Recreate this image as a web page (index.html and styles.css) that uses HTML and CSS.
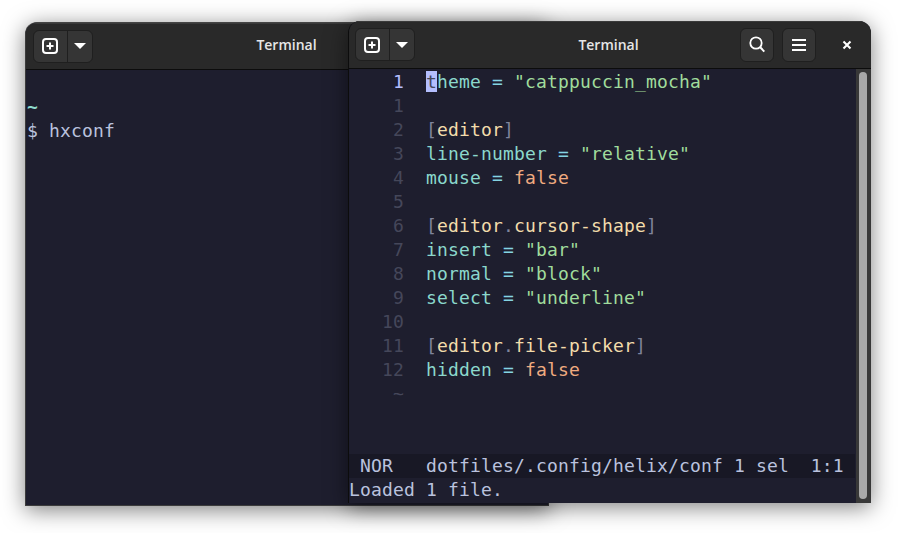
FILE: index.html
```html
<!DOCTYPE html>
<html lang="en">
<head>
<meta charset="utf-8">
<title>Terminal</title>
<link rel="stylesheet" href="styles.css">
</head>
<body>
<main class="desktop">
  <section class="window window-back">
    <header class="headerbar">
      <div class="header-start">
        <div class="split-button">
          <button class="btn btn-new"><svg width="16" height="16" viewBox="0 0 16 16"><rect x="1" y="1" width="14" height="14" rx="3" fill="none" stroke="#fff" stroke-width="2"/><path d="M8 4.5v7M4.5 8h7" stroke="#fff" stroke-width="2" fill="none"/></svg></button>
          <button class="btn btn-caret"><svg width="12" height="6" viewBox="0 0 12 6"><path d="M0 0h12L6 6z" fill="#fff"/></svg></button>
        </div>
      </div>
      <h1 class="title">Terminal</h1>
      <div class="header-end"></div>
    </header>
    <div class="term term-back">
<div class="row"> </div>
<div class="row tilde-row"><b class="teal">~</b></div>
<div class="row prompt">$ hxconf</div>
    </div>
  </section>

  <section class="window window-front">
    <header class="headerbar">
      <div class="header-start">
        <div class="split-button">
          <button class="btn btn-new"><svg width="16" height="16" viewBox="0 0 16 16"><rect x="1" y="1" width="14" height="14" rx="3" fill="none" stroke="#fff" stroke-width="2"/><path d="M8 4.5v7M4.5 8h7" stroke="#fff" stroke-width="2" fill="none"/></svg></button>
          <button class="btn btn-caret"><svg width="12" height="6" viewBox="0 0 12 6"><path d="M0 0h12L6 6z" fill="#fff"/></svg></button>
        </div>
      </div>
      <h1 class="title">Terminal</h1>
      <div class="header-end">
        <button class="btn btn-square"><svg width="16" height="17" viewBox="0 0 16 17"><circle cx="7" cy="7" r="5.7" fill="none" stroke="#fff" stroke-width="1.8"/><path d="M11 11l4.3 4.6" stroke="#fff" stroke-width="2" fill="none"/></svg></button>
        <button class="btn btn-square"><svg width="14" height="12" viewBox="0 0 14 12"><path d="M0 1h14M0 6h14M0 11h14" stroke="#fff" stroke-width="2" fill="none"/></svg></button>
        <button class="btn-close"><svg width="10" height="10" viewBox="0 0 10 10"><path d="M1.5 1.5l7 7M8.5 1.5l-7 7" stroke="#fff" stroke-width="2.1" fill="none"/></svg></button>
      </div>
    </header>
    <div class="body">
      <div class="term term-front">
<div class="row"><span class="nr-on">    1 </span> <span class="cursor">t</span><span class="key">heme</span> <span class="op">=</span> <span class="str">"catppuccin_mocha"</span></div>
<div class="row"><span class="nr">    1</span></div>
<div class="row"><span class="nr">    2  </span><span class="br">[</span><span class="sec">editor</span><span class="br">]</span></div>
<div class="row"><span class="nr">    3  </span><span class="key">line-number</span> <span class="op">=</span> <span class="str">"relative"</span></div>
<div class="row"><span class="nr">    4  </span><span class="key">mouse</span> <span class="op">=</span> <span class="bool">false</span></div>
<div class="row"><span class="nr">    5</span></div>
<div class="row"><span class="nr">    6  </span><span class="br">[</span><span class="sec">editor</span><span class="br">.</span><span class="sec">cursor-shape</span><span class="br">]</span></div>
<div class="row"><span class="nr">    7  </span><span class="key">insert</span> <span class="op">=</span> <span class="str">"bar"</span></div>
<div class="row"><span class="nr">    8  </span><span class="key">normal</span> <span class="op">=</span> <span class="str">"block"</span></div>
<div class="row"><span class="nr">    9  </span><span class="key">select</span> <span class="op">=</span> <span class="str">"underline"</span></div>
<div class="row"><span class="nr">   10</span></div>
<div class="row"><span class="nr">   11  </span><span class="br">[</span><span class="sec">editor</span><span class="br">.</span><span class="sec">file-picker</span><span class="br">]</span></div>
<div class="row"><span class="nr">   12  </span><span class="key">hidden</span> <span class="op">=</span> <span class="bool">false</span></div>
<div class="row"><span class="nr">    ~</span></div>
<div class="row"> </div>
<div class="row"> </div>
<div class="row status"> NOR   dotfiles/.config/helix/conf 1 sel  1:1</div>
<div class="row message">Loaded 1 file.</div>
      </div>
      <div class="scrollbar"><div class="thumb"></div></div>
    </div>
  </section>
</main>
</body>
</html>
```
FILE: styles.css
```css
* { box-sizing: border-box; }
html, body { margin: 0; padding: 0; background: #fff; }
.desktop { position: relative; width: 901px; height: 533px; overflow: hidden; background: #fff; }

.window {
  position: absolute;
  display: flex;
  flex-direction: column;
  width: 524px;
  background: #1e1e2e;
  border-radius: 12px 12px 0 0;
  box-shadow: 0 4px 22px rgba(0, 0, 0, .5);
  overflow: hidden;
}
.window-back { left: 25px; top: 22px; height: 484px; border: 1px solid #3c3c3c; border-top-color: #444; }
.window-front { left: 348px; top: 21px; width: 523px; height: 482px; border-left: 1px solid #0c0c0c; }

.headerbar {
  display: grid;
  grid-template-columns: 1fr auto 1fr;
  align-items: center;
  height: 47px;
  flex: none;
  padding: 0 7px;
  background: #292929;
  border-bottom: 1px solid #0c0c0c;
  box-shadow: inset 0 1px 0 #3a3a3a;
}
.window-front .headerbar { height: 48px; padding-left: 6px; }
.title {
  margin: 0;
  font: 600 14px/20px "Open Sans", "Noto Sans", sans-serif;
  color: #e6e6e6;
}
.window-back .title { margin-bottom: 2px; margin-right: 1px; }
.window-front .title { margin-right: 2px; }
.header-start, .header-end { display: flex; align-items: center; }
.header-end { justify-content: flex-end; gap: 8px; }
.split-button { display: flex; height: 33px; }
.btn {
  display: flex;
  align-items: center;
  justify-content: center;
  margin: 0;
  padding: 0;
  background: #353535;
  border: 1px solid #1f1f1f;
}
.btn-new { width: 35px; padding-right: 1px; border-radius: 6px 0 0 6px; }
.btn-caret { width: 26px; margin-left: -1px; border-radius: 0 6px 6px 0; }
.btn-square { width: 34px; height: 34px; border-radius: 6px; }
.btn-close {
  display: flex;
  align-items: center;
  justify-content: center;
  width: 34px;
  height: 34px;
  margin-left: 6px;
  padding: 0;
  background: none;
  border: 0;
}

.term {
  font: 400 18px/24px "DejaVu Sans Mono", monospace;
  letter-spacing: .16px;
  color: #bac2de;
  background: #1e1e2e;
  padding-top: 1px;
}
.row { height: 24px; white-space: pre; }
.term-back { flex: 1; padding-left: 1px; }
.body { display: flex; flex: 1; min-height: 0; }
.term-front { flex: 1; min-width: 0; }
.scrollbar { flex: none; width: 15px; padding: 3px 4px 4px 3px; background: #383838; }
.thumb { width: 8px; height: 100%; background: #a8a8a8; border-radius: 4px; }

.teal { color: #8fdccf; font-weight: 700; }
.nr { color: #45475a; }
.nr-on { color: #b4befe; }
.cursor { background: #b4befe; color: #45475a; }
.key { color: #8bd8cc; }
.op { color: #85d4e2; }
.str { color: #a0dc9c; }
.bool { color: #f0ab80; }
.sec { color: #f2dcab; }
.br { color: #7f849c; }
.status { background: #181825; margin-right: 1px; }
.message { color: #bac2de; }
```
